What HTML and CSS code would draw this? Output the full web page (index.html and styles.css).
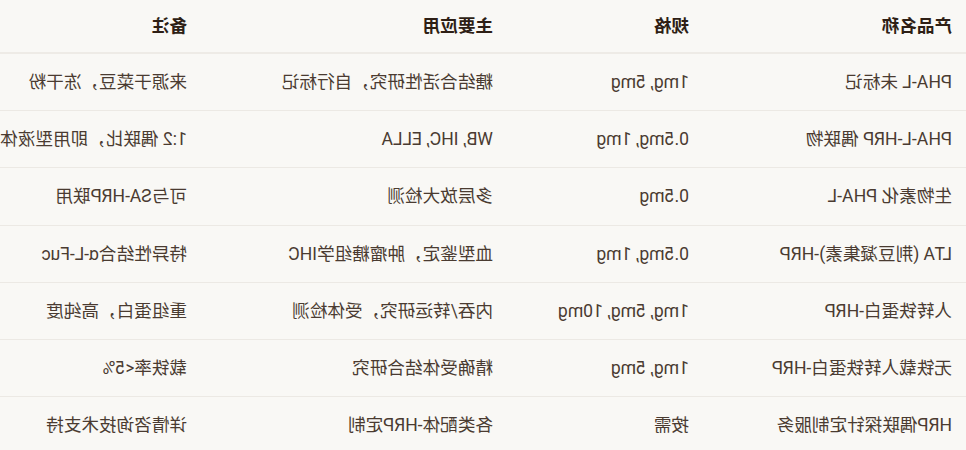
FILE: index.html
```html
<!DOCTYPE html>
<html lang="zh-CN">
<head>
<meta charset="UTF-8">
<meta name="viewport" content="width=device-width, initial-scale=1.0">
<title>HRP偶联产品规格</title>
<link rel="stylesheet" href="styles.css">
</head>
<body>
<div class="page">
  <table class="spec-table">
    <colgroup>
      <col class="col-name">
      <col class="col-size">
      <col class="col-use">
      <col class="col-note">
    </colgroup>
    <thead>
      <tr>
        <th>产品名称</th>
        <th>规格</th>
        <th>主要应用</th>
        <th>备注</th>
      </tr>
    </thead>
    <tbody>
      <tr>
        <td>PHA-L 未标记</td>
        <td>1mg, 5mg</td>
        <td>糖结合活性研究，自行标记</td>
        <td>来源于菜豆，冻干粉</td>
      </tr>
      <tr>
        <td>PHA-L-HRP 偶联物</td>
        <td>0.5mg, 1mg</td>
        <td>WB, IHC, ELLA</td>
        <td>1:2 偶联比，即用型液体</td>
      </tr>
      <tr>
        <td>生物素化 PHA-L</td>
        <td>0.5mg</td>
        <td>多层放大检测</td>
        <td>可与SA-HRP联用</td>
      </tr>
      <tr>
        <td>LTA (荆豆凝集素)-HRP</td>
        <td>0.5mg, 1mg</td>
        <td>血型鉴定，肿瘤糖组学IHC</td>
        <td>特异性结合α-L-Fuc</td>
      </tr>
      <tr>
        <td>人转铁蛋白-HRP</td>
        <td>1mg, 5mg, 10mg</td>
        <td>内吞/转运研究，受体检测</td>
        <td>重组蛋白，高纯度</td>
      </tr>
      <tr>
        <td>无铁载人转铁蛋白-HRP</td>
        <td>1mg, 5mg</td>
        <td>精确受体结合研究</td>
        <td>载铁率&lt;5%</td>
      </tr>
      <tr>
        <td>HRP偶联探针定制服务</td>
        <td>按需</td>
        <td>各类配体-HRP定制</td>
        <td>详情咨询技术支持</td>
      </tr>
    </tbody>
  </table>
</div>
</body>
</html>
```

FILE: styles.css
```css
html, body {
  margin: 0;
  padding: 0;
  background-color: #f9f8f5;
  font-family: Roboto, 'Noto Sans CJK SC', sans-serif;
  color: #4a3b31;
}

/* the whole view is shown mirrored */
.page {
  width: 966px;
  height: 450px;
  overflow: hidden;
  transform: scaleX(-1);
}

.spec-table {
  border-collapse: collapse;
  table-layout: fixed;
  width: 1005px;
  font-size: 17.6px;
  line-height: 1.6;
}

.col-name { width: 263px; }
.col-size { width: 196px; }
.col-use { width: 306px; }
.col-note { width: 240px; }

.spec-table th,
.spec-table td {
  text-align: left;
  white-space: nowrap;
  padding: 14px 14px;
}

.spec-table th {
  padding: 12px 14px;
  font-weight: 700;
  color: #2e1f15;
  border-bottom: 2px solid #eeebe6;
}

.spec-table td {
  border-bottom: 1px solid #ece9e4;
}
```
